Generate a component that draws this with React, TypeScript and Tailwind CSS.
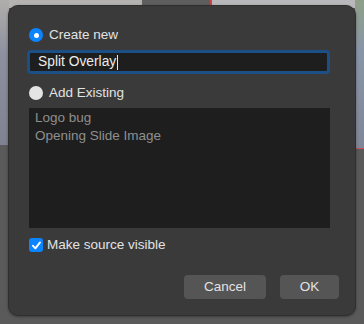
import React from "react";

export default function App() {
  const font = { fontFamily: '"Liberation Sans", Arial, sans-serif' };
  return (
    <div
      className="relative w-[364px] h-[324px] overflow-hidden bg-[#5a5a5a] pt-[5px] pl-[8px]"
      style={font}
    >
      {/* blurred backdrop behind the dialog */}
      <div className="absolute inset-0">
        <div className="absolute left-0 top-0 w-[142px] h-[8px] bg-[#b4b3b2]" />
        <div className="absolute left-[142px] top-0 w-[68px] h-[8px] bg-[#5e5e5e]" />
        <div className="absolute left-[210px] top-0 w-[2px] h-[6px] bg-[#d0404a]" />
        <div className="absolute left-[212px] top-0 w-[152px] h-[8px] bg-[#b9b9bb]" />
        <div className="absolute left-0 top-0 w-[9px] h-[145px] bg-[linear-gradient(180deg,#b0adab_0%,#8b8f9e_40%,#7e8291_100%)]" />
        <div className="absolute right-0 top-0 w-[9px] h-[148px] bg-[linear-gradient(180deg,#8fa088_0%,#8995a8_35%,#7f8797_100%)]" />
        <div className="absolute right-0 top-[148px] w-[8px] h-[1px] bg-[#c8505a]" />
      </div>

      <div className="relative w-[348px] h-[311px] rounded-[10px] bg-[#3a3a3a] border border-[#2f2f2f] shadow-[0_1px_3px_rgba(0,0,0,0.35)] pl-[20px] pr-[16px] pt-[21px] text-[13.5px] text-[#e2e2e2]">
        {/* Create new */}
        <div className="flex items-center gap-[6px] h-[16px]">
          <div className="w-[14px] h-[14px] rounded-full bg-[#0a84ff] flex items-center justify-center">
            <div className="w-[5px] h-[5px] rounded-full bg-white" />
          </div>
          <span className="leading-none">Create new</span>
        </div>

        {/* input */}
        <div className="mt-[7px] -ml-[2px] w-[303px] h-[24px] rounded-[4px] border-[3px] border-[#1b4f86] bg-[#1e1e1e] flex items-center pl-[8px]">
          <span className="leading-none text-[#ececec] text-[13.8px]">Split Overlay</span>
          <span className="ml-[1px] w-[1px] h-[15px] bg-[#e8e8e8]" />
        </div>

        {/* Add existing */}
        <div className="mt-[11px] flex items-center gap-[6px] h-[16px]">
          <div className="w-[14px] h-[14px] rounded-full bg-[#e4e4e4]" />
          <span className="leading-none">Add Existing</span>
        </div>

        {/* list */}
        <div className="mt-[7px] w-[301px] h-[120px] bg-[#1e1e1e] pt-[1px] px-[6px] text-[#8f8f8f]">
          <div className="h-[18px] flex items-center">Logo bug</div>
          <div className="h-[18px] flex items-center">Opening Slide Image</div>
        </div>

        {/* checkbox */}
        <div className="mt-[9px] flex items-center gap-[4px] h-[16px]">
          <div className="w-[14px] h-[14px] rounded-[3px] bg-[#0a84ff] flex items-center justify-center">
            <svg width="11" height="11" viewBox="0 0 11 11" fill="none">
              <path
                d="M2 5.8 L4.4 8.3 L9 2.4"
                stroke="white"
                strokeWidth="1.9"
                strokeLinecap="round"
                strokeLinejoin="round"
              />
            </svg>
          </div>
          <span className="leading-none">Make source visible</span>
        </div>

        {/* buttons */}
        <div className="mt-[22px] flex justify-end gap-[14px]">
          <button className="w-[82px] h-[24px] rounded-[4px] bg-[#555555] text-[#e2e2e2] text-[13.5px] leading-none">
            Cancel
          </button>
          <button className="w-[59px] h-[24px] rounded-[4px] bg-[#555555] text-[#e2e2e2] text-[13.5px] leading-none">
            OK
          </button>
        </div>
      </div>
    </div>
  );
}
